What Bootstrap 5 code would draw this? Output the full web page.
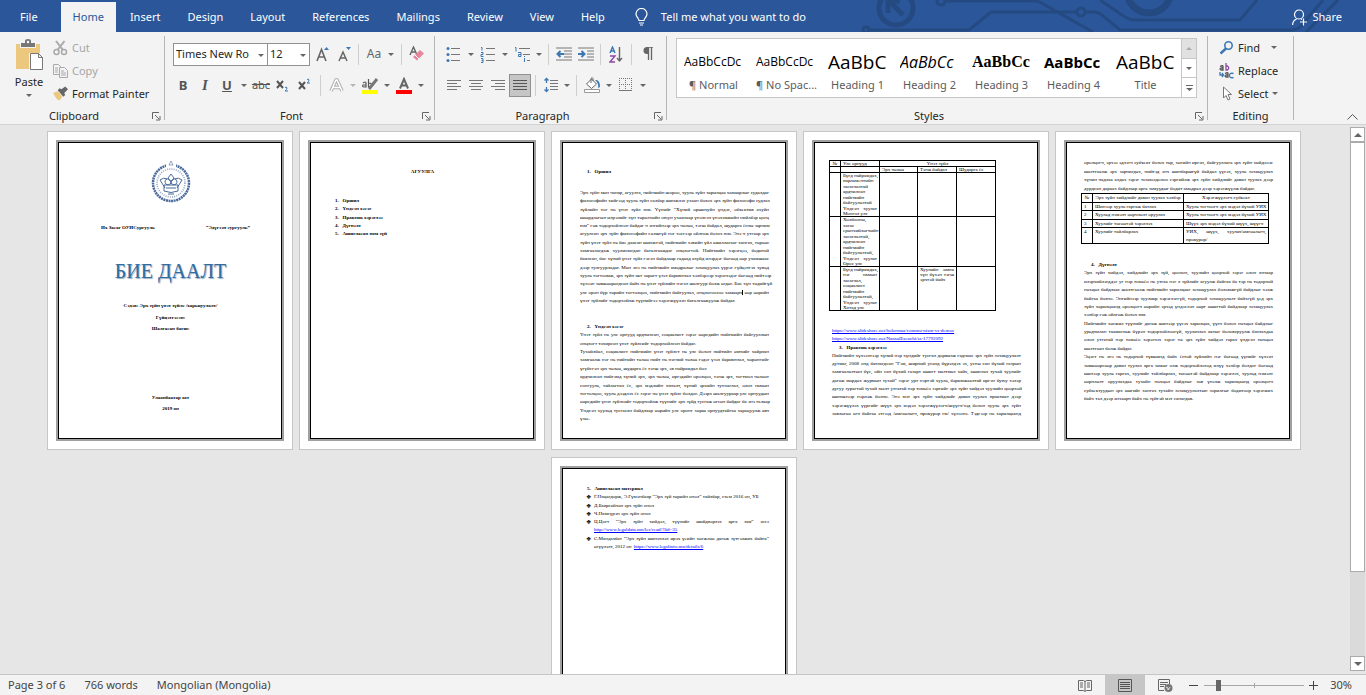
<!DOCTYPE html>
<html lang="en">
<head>
<meta charset="utf-8">
<meta name="viewport" content="width=device-width, initial-scale=1">
<title>Word</title>
<link href="https://cdn.jsdelivr.net/npm/bootstrap@5.3.0/dist/css/bootstrap.min.css" rel="stylesheet">
<style>
body{font:11px/16px "Noto Sans","Open Sans",sans-serif;color:#262626;background:#e6e6e6}
button,input{font:inherit;color:inherit}
button{border:0;background:none;padding:0}
svg{display:block;flex:none}
.topbar{height:32px;background:#2b579a;color:#fff;position:relative;padding-top:2px}
.circuit{position:absolute;right:0;top:0}
.tabs{padding-left:7px}
.tabs a{display:block;height:30px;line-height:30px;padding:0 13px;margin-right:1px;color:#fff;text-decoration:none}
.tabs a.on{background:#f3f3f3;color:#2b579a;padding:0 12px}
.tabs a.first{margin-right:10px}
.ribbon{height:93px;background:#f3f3f3;border-bottom:1px solid #d2d2d2}
.grp{height:84px;margin-top:4px;border-right:1px solid #b5b5b5;display:flex;flex-direction:column;justify-content:space-between;flex:none}
.g-clip{width:165px}.g-font{width:270px}.g-par{width:232px}.g-sty{width:541px}.g-edit{width:86px}
.cap{height:16px;line-height:16px;display:flex;align-items:center;text-align:center;margin-bottom:-4px}
.cap span{flex:1}
.cap button{width:16px;height:16px;display:grid;place-items:center}
.rw{display:flex;align-items:center;height:24px}
.rw+.rw{margin-top:7px}
.ic{width:22px;height:23px;display:grid;place-items:center;flex:none}
.ic.sel{background:#c5c5c5;border:1px solid #919191}
.dd{width:12px;height:23px;display:grid;place-items:center;flex:none}
.dd::after,.tri::after{content:"";border:3px solid transparent;border-top-color:#666;border-bottom:0}
.dd.off::after{border-top-color:#b5b5b5}
.vr1{width:1px;height:21px;background:#cfcfcf;margin:0 4px;flex:none}
.combo{height:23px;border:1px solid #919191;background:#fff;display:flex;flex:none}
.combo input{border:0;width:100%;min-width:0;padding:0 0 0 2px;background:none;outline:0}
.glyph{font-weight:700;color:#555;font-size:13px;line-height:16px}
.side button{display:flex;align-items:center;height:23px;gap:4px;white-space:nowrap}
.side .off{color:#a6a6a6}
.gallery{border:1px solid #c6c6c6;background:#fff;height:60px;margin:2px 10px 0 9px;display:flex}
.gallery .sty{width:72px;height:58px;padding:8px 6px 0 7px;flex:none}
.gallery b{display:block;font-weight:400;color:#000;height:26px;line-height:26px;overflow:hidden;white-space:nowrap;text-align:left;width:59px}
.gallery span{display:block;color:#5c5c5c;line-height:20px;white-space:nowrap;text-align:center}
.gallery b{font-family:"Open Sans",sans-serif}
.gallery .p1{font-size:12px}
.gallery .p2{font-size:19px}
.gallery .p3{font-size:16px;font-style:italic;font-weight:500}
.gallery .p4{font:700 16px/26px "Liberation Serif",serif}
.gallery .p5{font-size:15px;font-weight:700}
.spin{width:15px;border-left:1px solid #c6c6c6;margin-left:auto;display:flex;flex-direction:column}
.spin button{flex:1;display:grid;place-items:center}
.spin button+button{border-top:1px solid #c6c6c6}
.work{flex:1;min-height:0;overflow:hidden}
.pages{flex:1;gap:7px 6px;padding:6px 0 0;overflow:hidden;height:100%;align-content:flex-start}
.sheet{width:246px;height:319px;background:#fff;border:1px solid #c6c6c6;padding:8px;flex:none}
.frm{height:301px;border:2px solid #a0a0a0;outline:1px solid #000;outline-offset:-3px;padding:1px 17px 0 18px;font:5px/8px "Liberation Serif",serif;color:#000;display:flex;flex-direction:column;overflow:hidden}
.frm p,.frm h2{margin:0;font:inherit;line-height:8px;white-space:nowrap;flex:none}
.frm h2,.frm .bd{font-weight:700}
.frm h2{padding-left:7px}
.blk{display:flex;flex-direction:column;justify-content:space-between;flex:none}
.blk p{text-align:justify;text-align-last:justify}
.blk p.e{text-align-last:left}
.frm a{color:#00f}
.frm table{border-collapse:collapse;line-height:5px;flex:none;margin-left:-3px;table-layout:fixed}
.frm td,.frm th{border:1px solid #000;padding:0 2px;vertical-align:top;font-weight:400;white-space:nowrap}
.frm th{text-align:center}
.frm td p{line-height:5px}
.c44{height:43px}.c50{height:49px}
.emb{margin:18px auto 0}
.duo{display:flex;justify-content:space-between;padding:0 15px 0 25px;margin-top:21px}
.frm p.wa{font-size:20px;line-height:30px;color:#2e6ca4;text-shadow:1px 1px 1px #9ab;text-align:center;margin-top:24px}
.frm .m1{margin-top:16px}.frm .m2{margin-top:4px}.frm .m3{margin-top:3px}.frm .m4{margin-top:61px}
.toc{list-style:none;margin:21px 0 0;padding:0 0 0 7px;height:41px;font-weight:700}
.toc li{line-height:8px}
.frm .t25{margin-top:25px}
.h116{height:116px;margin-top:13px}.h100{height:100px;margin-top:18px}
.t17{margin-top:17px}.h91{height:91px;margin-top:16px}
.h33{height:34px;margin-top:16px}.h142{height:142px;margin-top:17px}
.h66{height:66px;margin-top:16px}
.h66 p{padding-left:14px;position:relative}
.h66 p.bu::before{content:"❖";position:absolute;left:6px;font:6px/8px "DejaVu Sans",sans-serif}
.caret{border-left:1px solid #000}
.sb{width:18px;flex:none;display:flex;flex-direction:column;padding:2px 1px 3px 2px}
.sb button{height:15px;border:1px solid #ababab;background:#fff;display:grid;place-items:center}
.sb .thumb{flex:430;border:1px solid #ababab;background:#fff}
.sb .track{flex:84;background:#dadada}
.stat{height:21px;background:#f3f3f3;border-top:1px solid #c6c6c6;color:#444;line-height:20px}
.stat .vw{width:40px;height:20px;display:grid;place-items:center}
.stat .vw.on{background:#c6c6c6}
.zoomr{-webkit-appearance:none;appearance:none;width:100px;height:12px;margin:0 5px;background:linear-gradient(#a6a6a6,#a6a6a6) 50px 50%/1px 5px no-repeat,linear-gradient(#a6a6a6,#a6a6a6) 0 50%/100% 1px no-repeat}
.zoomr::-webkit-slider-thumb{-webkit-appearance:none;width:5px;height:11px;background:#666}
</style>
</head>
<body class="d-flex flex-column vh-100 overflow-hidden">
<header class="topbar d-flex">
<svg class="circuit" width="520" height="32" viewBox="846 0 520 32" fill="none" stroke="#254a82" stroke-width="3"><circle cx="896" cy="8" r="17" stroke-width="5"/><path d="M889 1l14 14M888 13V1h12" stroke-width="5"/><circle cx="866" cy="30" r="3"/><path d="M869 30h100l22-18h86M1085 12h8q6 0 10 4l17 14h172q5 0 9-4l22-26M946 1h88q6 0 11 4l48 27M1100 0l25 17q5 3 10 3h105l17-20M1306 32l32-32"/><circle cx="941" cy="1" r="4"/><circle cx="1081" cy="12" r="4"/><circle cx="1149" cy="-9" r="22" stroke-width="7"/></svg>
<nav class="tabs d-flex position-relative"><a class="first" href="#">File</a><a class="on" href="#">Home</a><a href="#">Insert</a><a href="#">Design</a><a href="#">Layout</a><a href="#">References</a><a href="#">Mailings</a><a href="#">Review</a><a href="#">View</a><a href="#">Help</a></nav>
<button class="d-flex align-items-center position-relative ms-3" style="gap:13px"><svg width="13" height="18" viewBox="0 0 13 18" fill="none" stroke="#fff" stroke-width="1.2"><path d="M4 12.500c0-2-3-3.500-3-6.500a5.500 5.500 0 0 1 11 0c0 3-3 4.500-3 6.500zM4 15h5M5 17h3"/></svg>Tell me what you want to do</button>
<button class="d-flex align-items-center position-relative gap-1 ms-auto me-4"><svg width="16" height="17" viewBox="0 0 16 17" fill="none" stroke="#fff" stroke-width="1.200"><circle cx="7" cy="5.500" r="4.500"/><path d="M.6 16c0-3 1.500-5 4-6M9 10l1 .6M8 13h7M11.500 9.500v7"/></svg>Share</button>
</header>

<section class="ribbon d-flex">
<div class="grp g-clip">
 <div class="d-flex">
  <button class="d-flex flex-column align-items-center tri" style="margin-left:14px;padding-top:3px;gap:4px"><svg width="30" height="31" viewBox="0 0 30 31"><path fill="#ecc87f" d="M2 5h24v25H2z"/><path fill="#f3f3f3" d="M6 3h16v6H6zM15 14h15v17H15z"/><path fill="#777" d="M7 8V4h4V2q0-2 3-2t3 2v2h4v4z"/><circle cx="14" cy="3" r="1.200" fill="#fff"/><path d="M16.500 14.500h8l4 4v12h-12zM24.500 14.500v4h4" fill="#fff" stroke="#777"/></svg>Paste</button>
  <div class="side" style="margin-left:9px">
   <button class="off"><svg width="15" height="16" viewBox="0 0 15 16" fill="none" stroke="#aaa" stroke-width="1.500"><circle cx="3.500" cy="12" r="2.500"/><circle cx="11" cy="12" r="2.500"/><path d="M3 1l7 9M11.500 1l-7 9" stroke-width="2"/></svg>Cut</button>
   <button class="off"><svg width="15" height="14" viewBox="0 0 15 14" fill="#f3f3f3" stroke="#aaa"><path d="M.5.500h5l2 2v8h-7zM2 4h3M2 6h3M2 8h3"/><path d="M6.500 3.500h5l3 3v7h-8zM8 7h3M8 9h5M8 11h5"/></svg>Copy</button>
   <button><svg width="15" height="15" viewBox="0 0 16 15"><path fill="#ecc87f" d="M0 7l5-2 5 6-3 4q-3-1-4-3z"/><path fill="#666" d="M5 4l2-2 2 1 4-3 3 3-4 4 1 2-2 2z"/></svg>Format Painter</button>
  </div>
 </div>
 <div class="cap"><span>Clipboard</span><button aria-label="Clipboard options"><svg width="9" height="9" fill="none" stroke="#666"><path d="M.5 7V.5H7M3 3l4 4M8 4v4H4"/></svg></button></div>
</div>

<div class="grp g-font">
 <div style="padding:6px 0 0 8px">
  <div class="rw"><label class="combo" style="width:95px"><input aria-label="Font" value="Times New Ro"><span class="dd"></span></label><label class="combo" style="width:43px;margin-left:-1px"><input aria-label="Font size" value="12"><span class="dd"></span></label>
  <button class="ic" style="margin-left:2px" aria-label="Grow font"><svg width="14" height="16" viewBox="0 0 14 16"><path d="M1 15L5.500 3.500 10 15M2.500 11h6" fill="none" stroke="#666" stroke-width="1.600"/><path fill="#3c78b4" d="M8 4l2.500-3L13 4z"/></svg></button>
  <button class="ic" aria-label="Shrink font"><svg width="14" height="16" viewBox="0 0 14 16"><path d="M1 15L5 6l4 9M2.500 12h5" fill="none" stroke="#666" stroke-width="1.500"/><path fill="#3c78b4" d="M8 1h5l-2.500 3z"/></svg></button>
  <i class="vr1" style="margin-left:2px"></i><button class="ic" style="color:#666;font-size:12px">Aa</button><span class="dd"></span><i class="vr1"></i>
  <button class="ic" aria-label="Clear formatting"><svg width="16" height="16" viewBox="0 0 16 16"><path d="M1 9l3.500-8L8 9M2 6h5" fill="none" stroke="#666" stroke-width="1.400"/><path fill="#e8879c" d="M4 11l7-7 4 3.500-7 7z"/><path stroke="#fff" d="M6 9l4 4"/></svg></button></div>
  <div class="rw"><button class="ic glyph" style="margin-left:-1px">B</button><button class="ic glyph fst-italic" style="font-family:'Liberation Serif',serif;font-size:15px">I</button><button class="ic glyph text-decoration-underline">U</button><span class="dd"></span><button class="ic text-decoration-line-through" style="color:#555">abc</button>
  <button class="ic" aria-label="Subscript"><svg width="14" height="14" viewBox="0 0 14 14" fill="none"><path d="M1 3l6 7M7 3l-6 7" stroke="#555" stroke-width="2"/><path d="M9 9.500q2-1 2 .5T9 13h3" stroke="#3c78b4"/></svg></button><button class="ic" aria-label="Superscript"><svg width="14" height="14" viewBox="0 0 14 14" fill="none"><path d="M1 4l6 7M7 4l-6 7" stroke="#555" stroke-width="2"/><path d="M9 1.500q2-1 2 .5T9 5h3" stroke="#3c78b4"/></svg></button>
  <i class="vr1"></i><button class="ic" aria-label="Text effects"><svg width="15" height="15" viewBox="0 0 15 15"><path d="M2 13L7 2h1l5 11M4 9.500h7" fill="none" stroke="#b0b0b0" stroke-width="3.500"/><path d="M2 13L7 2h1l5 11M4 9.500h7" fill="none" stroke="#fff" stroke-width="1.400"/></svg></button><span class="dd off"></span>
  <button class="ic" aria-label="Highlight"><svg width="18" height="17" viewBox="0 0 18 17"><path fill="#ff0" d="M1 13h16v4H1z"/><path d="M2 6q3-2 3 0v4H3Q1 10 2 8h3M7.500 2v8h2q3-4-2-4" fill="none" stroke="#555" stroke-width="1.200"/><path d="M8 12l8-10" stroke="#777" stroke-width="3"/></svg></button><span class="dd"></span>
  <button class="ic" aria-label="Font color"><svg width="16" height="17" viewBox="0 0 16 17"><path fill="red" d="M0 13h16v4H0z"/><path d="M4 11.500L8 2l4 9.500M5.500 8.500h5" fill="none" stroke="#666" stroke-width="2"/></svg></button><span class="dd"></span></div>
 </div>
 <div class="cap"><span>Font</span><button aria-label="Font options"><svg width="9" height="9" fill="none" stroke="#666"><path d="M.5 7V.5H7M3 3l4 4M8 4v4H4"/></svg></button></div>
</div>

<div class="grp g-par">
 <div style="padding:6px 0 0 8px">
  <div class="rw"><button class="ic" aria-label="Bullets"><svg width="16" height="16" viewBox="0 0 16 16"><path d="M5 2.500h9M5 8.500h9M5 14.500h9" stroke="#777"/><g fill="#3c78b4"><circle cx="2" cy="2.500" r="1.500"/><circle cx="2" cy="8.500" r="1.500"/><circle cx="2" cy="14.500" r="1.500"/></g></svg></button><span class="dd"></span>
  <button class="ic" aria-label="Numbering"><svg width="16" height="17" viewBox="0 0 16 17" fill="none"><path d="M6 2.500h9M6 8.500h9M6 14.500h9" stroke="#777"/><path d="M1 1.500h1v3M1 6.500h2v2H1v2h2.500M1 12.500h2v4H1M1.500 14.500H3" stroke="#3c78b4"/></svg></button><span class="dd"></span>
  <button class="ic" aria-label="Multilevel list"><svg width="17" height="17" viewBox="0 0 17 17" fill="none"><path d="M5 2.500h11M9 8.500h7M13 14.500h3" stroke="#777"/><path d="M1 1.500h1v4M4 6.500h3v4H4.500v-2H7M10.500 12v4M10.500 10v1" stroke="#3c78b4"/></svg></button><span class="dd" style="width:11px"></span><i class="vr1"></i>
  <button class="ic" aria-label="Decrease indent"><svg width="17" height="14" viewBox="0 0 17 14" fill="none"><path d="M0 1h16M8 4h8M8 7h8M8 10h8M0 13h16" stroke="#777"/><path d="M8 7H2M4.500 4l-3 3 3 3" stroke="#3c78b4" stroke-width="2"/></svg></button><button class="ic" aria-label="Increase indent"><svg width="17" height="14" viewBox="0 0 17 14" fill="none"><path d="M0 1h16M9 4h7M9 7h7M9 10h7M0 13h16" stroke="#777"/><path d="M0 7h6M3.500 4l3 3-3 3" stroke="#3c78b4" stroke-width="2"/></svg></button><i class="vr1" style="margin-left:3px"></i>
  <button class="ic" aria-label="Sort"><svg width="14" height="17" viewBox="0 0 14 17" fill="none" stroke-width="1.400"><path d="M1 7l2.500-6L6 7M2 5h3" stroke="#3c78b4"/><path d="M1 10h5l-5 6h5" stroke="#8a4aa8"/><path d="M10.500 1v14M8 12l2.500 3L13 12" stroke="#666"/></svg></button><i class="vr1"></i><button class="ic" aria-label="Show marks"><svg width="11" height="14" viewBox="0 0 11 14"><path d="M5 0h6M6.500 0v13M9.500 0v13" stroke="#666" stroke-width="1.300"/><path fill="#666" d="M5 0a3.500 3.500 0 0 0 0 7h1V0z"/></svg></button></div>
  <div class="rw"><button class="ic" aria-label="Align left"><svg width="14" height="11" stroke="#777"><path d="M0 .5h14M0 3.500h10M0 6.500h14M0 9.500h10"/></svg></button><button class="ic" aria-label="Center"><svg width="14" height="11" stroke="#777"><path d="M0 .5h14M2 3.500h10M0 6.500h14M2 9.500h10"/></svg></button><button class="ic" aria-label="Align right"><svg width="14" height="11" stroke="#777"><path d="M0 .5h14M4 3.500h10M0 6.500h14M4 9.500h10"/></svg></button><button class="ic sel" aria-label="Justify"><svg width="14" height="11" stroke="#555"><path d="M0 .5h14M0 3.500h14M0 6.500h14M0 9.500h14"/></svg></button><i class="vr1"></i>
  <button class="ic" aria-label="Line spacing"><svg width="15" height="16" viewBox="0 0 15 16" fill="none"><path d="M6 3.500h8M6 6.500h8M6 9.500h8M6 12.500h8" stroke="#777"/><path d="M2.500 1v5M2.500 10v5M.5 3.500l2-2 2 2M.5 12.500l2 2 2-2" stroke="#3c78b4" stroke-width="1.300"/></svg></button><span class="dd" style="width:10px"></span><i class="vr1"></i>
  <button class="ic" aria-label="Shading"><svg width="17" height="16" viewBox="0 0 17 16" fill="none"><path d="M.5 12.500h15v3H.5z" fill="#fff" stroke="#999"/><path d="M2.500 7l5-5 5 5-5 4.500zM7 6V1.500q1.500-2 2 0V4" fill="#fff" stroke="#666"/><path fill="#3c78b4" d="M11 3q5-1 5 7l-2 1q1-5-3-8z"/></svg></button><span class="dd"></span><button class="ic" aria-label="Borders"><svg width="14" height="14" viewBox="0 0 14 14" stroke="#777" fill="none"><path d="M.5 0v12M6.500 0v12M12.500 0v12M0 .5h13M0 6.500h13" stroke-dasharray="1 1"/><path d="M0 12.500h13"/></svg></button><span class="dd"></span></div>
 </div>
 <div class="cap"><span>Paragraph</span><button aria-label="Paragraph options"><svg width="9" height="9" fill="none" stroke="#666"><path d="M.5 7V.5H7M3 3l4 4M8 4v4H4"/></svg></button></div>
</div>

<div class="grp g-sty">
 <div class="gallery">
  <button class="sty"><b class="p1">AaBbCcDc</b><span>¶ Normal</span></button><button class="sty"><b class="p1">AaBbCcDc</b><span>¶ No Spac...</span></button><button class="sty"><b class="p2">AaBbC</b><span>Heading 1</span></button><button class="sty"><b class="p3">AaBbCc</b><span>Heading 2</span></button><button class="sty"><b class="p4">AaBbCc</b><span>Heading 3</span></button><button class="sty"><b class="p5">AaBbCc</b><span>Heading 4</span></button><button class="sty"><b class="p2">AaBbC</b><span>Title</span></button>
  <div class="spin"><button aria-label="Up" style="background:#e1e1e1"><svg width="6" height="3"><path fill="#aaa" d="M0 3l3-3 3 3z"/></svg></button><button aria-label="Down"><svg width="6" height="3"><path fill="#666" d="M0 0l3 3 3-3z"/></svg></button><button aria-label="More"><svg width="7" height="6"><path fill="#666" d="M0 0h7v1H0zM0 3h7L3.500 6z"/></svg></button></div>
 </div>
 <div class="cap"><span>Styles</span><button aria-label="Styles options"><svg width="9" height="9" fill="none" stroke="#666"><path d="M.5 7V.5H7M3 3l4 4M8 4v4H4"/></svg></button></div>
</div>

<div class="grp g-edit">
 <div class="side" style="padding-left:11px">
  <button><svg width="15" height="14" viewBox="0 0 15 14" fill="none" stroke="#3c78b4"><circle cx="9.500" cy="4.500" r="3.700" stroke-width="1.600"/><path d="M7 7.500l-5.500 5" stroke-width="2.500"/></svg>Find<span class="dd" style="margin-left:4px"></span></button>
  <button><svg width="15" height="16" viewBox="0 0 15 16" fill="none" stroke-width="1.300"><path d="M1 3.500q3-1.500 3 0V7H2Q0 6 2 5h2" stroke="#555"/><path d="M7 0v7h1.500q2.500-2 0-4H7" stroke="#8a4aa8"/><path d="M6 10.500q3-1.500 3 0V14H7q-2-1 0-2h2" stroke="#555"/><path d="M14.500 10.500q-4-1-4 2t4 2M1 9v3h3M3 10l1.500 2L3 14" stroke="#3c78b4"/></svg>Replace</button>
  <button><svg width="15" height="15" viewBox="0 0 15 15"><path d="M4.500 1v11l2.500-2.500 2 4.500 2-1-2-4.500h3.500z" fill="#fff" stroke="#777"/></svg>Select<span class="dd" style="margin-left:-4px"></span></button>
 </div>
 <div class="cap"><span>Editing</span></div>
</div>
<button class="ms-auto align-self-end mb-1 me-2" aria-label="Collapse"><svg width="11" height="6" fill="none" stroke="#555"><path d="M.5 5.500l5-5 5 5"/></svg></button>
</section>

<main class="work d-flex">
<div class="pages d-flex flex-wrap justify-content-center">
<article class="sheet"><div class="frm">
 <svg class="emb" width="40" height="42" viewBox="0 0 40 42" fill="none" stroke="#4a6a9c"><circle cx="20" cy="22" r="18" stroke-width="2.500" stroke-dasharray="2 .6"/><circle cx="20" cy="22" r="14" stroke-dasharray="1 1.200" stroke-width="1.600" opacity=".6"/><path d="M15 0h10v7H15z" fill="#fff" stroke="none"/><path d="M18 4l2-4 2 4z" fill="#fff" stroke-width=".6"/><path d="M14 27l-5-8q3-3 8-1l3 2 3-2q5-2 8 1l-5 8M13 24h14v6q-7 3-14 0zM15 27h10M17 33h6M20 13l-3 4 3 4 3-4zM16 18a3 3 0 1 0 4 3 3 3 0 1 0 4-3"/></svg>
 <div class="duo bd"><p>Их Засаг ОУИСургууль</p><p>“Эдүгээн сургууль”</p></div>
 <p class="wa">БИЕ ДААЛТ</p>
 <p class="bd text-center m1">Сэдэв: Эрх зүйн үнэт зүйлс /харьцуулалт/</p><p class="bd text-center m2">Гүйцэтгэсэн:</p><p class="bd text-center m3">Шалгасан багш:</p>
 <p class="bd text-center m4">Улаанбаатар хот</p><p class="bd text-center m3">2019 он</p>
</div></article>

<article class="sheet"><div class="frm">
 <p class="bd text-center t25">АГУУЛГА</p>
 <ol class="toc blk"><li>1.&ensp; Оршил</li><li>2.&ensp; Үндсэн хэсэг</li><li>3.&ensp; Практик хэрэглээ</li><li>4.&ensp; Дүгнэлт</li><li>5.&ensp; Ашигласан ном зүй</li></ol>
</div></article>

<article class="sheet"><div class="frm">
 <h2 class="t25">1.&ensp; Оршил</h2>
 <div class="blk h116"><p>Эрх зүйн мөн чанар, агуулга, нийгмийн шороо, хууль зүйн харилцаа хамаарлыг судалдаг</p><p>философийн хийгээд хууль зүйн салбар шинжлэх ухаан болох эрх зүйн философи судлах</p><p>зүйлийн нэг нь үнэт зүйл юм. Үүнийг “Хүний оршихуйн үндэс, объектив ахуйн</p><p>шаардлагын илрэлийг хүн төрөлхийн оюун ухаанаар үнэлсэн үнэлэмжийн нийлбэр цогц</p><p>юм” гэж тодорхойлсон байдаг ч энгийнээр эрх чөлөө, тэгш байдал, шударга ёсны зарчим</p><p>агуулсан эрх зүйн философийн салшгүй нэг хэсгээр ойлгож болох юм. Энэ ч утгаар эрх</p><p>зүйн үнэт зүйл нь бие даасан шинжтэй, нийгмийн хэвийн үйл ажиллагааг хангах, төрөөс</p><p>хамгаалагдаж хуульчлагдан баталгааждаг онцлогтой. Нийгмийн хэрэгцээ, бодитой</p><p>баялсан, бас хүний үнэт зүйл гэсэн байдлаар гадаад ахуйд илэрдэг бөгөөд өөр ухамшаас</p><p>дээр тулгуурладаг. Мөн энэ нь нийгмийн амьдралыг зохицуулах үүрэг гүйцэтгэх хувьд</p><p>хууль тогтоомж, эрх зүйн акт зөрөгт үзэл баримтлал хэлбэрээр хэрэглэдэг бөгөөд нийтээр</p><p>хүлээн зөвшөөрөгдсөн байх нь үнэт зүйлийн нэгэн шалгуур болж өгдөг. Бие хүн төдийгүй</p><p>улс орон бүр төрийн тогтолцоо, нийгмийн байгуулал, онцлогоосоо хамаарч<span class="caret"></span> өөр өөрийн</p><p class="e">үнэт зүйлийг тодорхойлж түүнийгээ хэрэгжүүлэн баталгаажуулж байдаг.</p></div>
 <div class="blk h100"><h2>2.&ensp; Үндсэн хэсэг</h2><p>Үнэт зүйл нь улс орнууд ардчилсан, социалист зэрэг өөрсдийн нийгмийн байгууллын</p><p class="e">онцлогт тохирсон үнэт зүйлсийг тодорхойлсон байдаг.</p><p>Тухайлбал, социалист нийгмийн үнэт зүйлст нь улс болон нийтийн өмчийг хайрлан</p><p>хамгаалж нэг нь нийтийн төлөө нийт нь нэгний төлөө гэдэг үзэл баримтлал, хөрөнгийг</p><p class="e">үгүйсгэн эрх чөлөө, шударга ёс тэгш эрх, эв найрамдал бол</p><p>ардчилсан нийгэмд хүний эрх, эрх чөлөө, иргэдийн оролцоо, тэгш эрх, тогтмол чөлөөт</p><p>сонгууль, тайлагнах ёс, эрх мэдлийн хяналт, хүний эрхийн тунхаглал, олон намын</p><p>тогтолцоо, хууль дээдлэх ёс зэрэг нь үнэт зүйлс болдог. Дээрх шалгуураар улс орнуудын</p><p>өөрсдийн үнэт зүйлсийг тодорхойлж түүнийг эрх зүйд тусгаж өгсөн байдаг ба энэ талаар</p><p>Үндсэн хуульд тусгасан байдлаар өөрийн улс оронг хөрш орнуудтайгаа харьцуулж авч</p><p class="e">үзье.</p></div>
</div></article>

<article class="sheet"><div class="frm">
 <table class="t17" style="width:166px"><colgroup><col style="width:11px"><col style="width:39px"><col style="width:38px"><col style="width:39px"><col style="width:39px"></colgroup>
 <tr><th>№</th><td>Улс орнууд</td><th colspan="3">Үнэт зүйл</th></tr><tr><td></td><td></td><td>Эрх чөлөө</td><td>Тэгш байдал</td><td>Шударга ёс</td></tr>
 <tr><td></td><td><div class="blk c44"><p class="e">Бүгд найрамдах,</p><p class="e">парламентийн</p><p class="e">засаглалтай</p><p class="e">ардчилсан</p><p class="e">нийгмийн</p><p class="e">байгуулалтай</p><p>Үндсэн хуульт</p><p class="e">Монгол улс</p></div></td><td></td><td></td><td></td></tr>
 <tr><td></td><td><div class="blk c50"><p class="e">Холбооны,</p><p class="e">хагас</p><p class="e">ерөнхийлөгчийн</p><p class="e">засаглалтай,</p><p class="e">ардчилсан</p><p class="e">нийгмийн</p><p class="e">байгуулалтай,</p><p>Үндсэн хуульт</p><p class="e">Орос улс</p></div></td><td></td><td></td><td></td></tr>
 <tr><td></td><td><div class="blk c44"><p class="e">Бүгд найрамдах,</p><p>нэг намын</p><p class="e">засаглал,</p><p class="e">социалист</p><p class="e">нийгмийн</p><p class="e">байгуулалтай,</p><p>Үндсэн хуульт</p><p class="e">Хятад улс</p></div></td><td></td><td><div class="blk"><p>Хуулийн өмнө</p><p>хүн бүхэн тэгш</p><p class="e">эрхтэй байх</p></div></td><td></td></tr></table>
 <div class="blk h91"><p class="e"><a href="#">https://www.slideshare.net/bolormaa/commu-nism-vs-democ</a></p><p class="e"><a href="#">https://www.slideshare.net/NansalEsenchi/ss-17792092</a></p><h2>3.&ensp; Практик хэрэглээ</h2><p>Нийгмийн хүлээлтээр хүний нэр хүндийг тусган дорвилж гаднаас эрх зүйн зохицуулалт</p><p>дутмаг, 2008 онд батлагдсан “Гэм, ширний усанд бүрэлдэх эх, усны сан бүхий газрын</p><p>хамгаалалтын бүс, ойн сан бүхий газарт ашигт малтмал хайх, ашиглах тухай хуулийг</p><p>дагаж мөрдөх журмын тухай” зэрэг урт нэртэй хууль, баримжаалтай иргэн буюу хэлэр</p><p>дугуу зурагтай тухай заалт утгатай нэр томьёо зэргийг эрх зүйн хийдэл хуулийн цоорхой</p><p>шиншлээр нэрлэж болно. Энэ мэт эрх зүйн хийдлийг даван туулах практикт дээр</p><p>хэрэгжүүлэх үүргийг шүүх эрх мэдэл хэрэгжүүлэгч/шүүгч/хэд болон хууль эрх зүйн</p><p>зөвлөгөө өгч байгаа этгээд /өмгөөлөгч, прокурор гм/ хүлээнэ. Тэдгээр нь харилцаанд</p></div>
</div></article>

<article class="sheet"><div class="frm">
 <div class="blk h33"><p>оролцогч, эрхээ эдлэгч субъект болох төр, хөгийн иргэн, байгууллага эрх зүйн хийдлээс</p><p>шалтгаалж эрх зөрчигдөх, нийтэд энх шинбаршгүй байдал үүсэх, хууль зохицуулах</p><p>хүчин чадлаа алдах зэрэг тохиолдолоо сэргийлж эрх зүйн хийдлийг даван туулах дээр</p><p class="e">дурдсан дараах байдлаар арга замуудыг бодит амьдрал дээр хэрэгжүүлж байдаг.</p></div>
 <table style="width:187px;line-height:7px"><colgroup><col style="width:11px"><col style="width:91px"><col style="width:85px"></colgroup>
 <tr style="height:9px"><th>№</th><th>Эрх зүйн хийдлийг даван туулах хэлбэр</th><th>Хэрэгжүүлэгч субъект</th></tr><tr><td>1</td><td>Шинээр хууль гаргаж батлах</td><td>Хууль тогтоогч эрх мэдэл бүхий УИХ</td></tr><tr style="height:9px"><td>2</td><td>Хуульд нэмэлт өөрчлөлт оруулах</td><td>Хууль тогтоогч эрх мэдэл бүхий УИХ</td></tr><tr><td>3</td><td>Хуулийг төсөөтэй хэрэглэх</td><td>Шүүх эрх мэдэл бүхий шүүх, шүүгч</td></tr><tr style="height:16px"><td>4</td><td>Хуулийг тайлбарлах</td><td><div class="blk" style="gap:3px;padding-top:1px"><p>УИХ, шүүх, хуульч/өмгөөлөгч,</p><p class="e">прокурор/</p></div></td></tr></table>
 <div class="blk h142"><h2>4.&ensp; Дүгнэлт</h2><p>Эрх зүйн хийдэл, хийдлийн эрх зүй, цоохон, хуулийн цоорхой зэрэг олон янзаар</p><p>илэрхийлэгддэг уг нэр томьёо нь утгаа нэг л зүйлийг агуулж байгаа ба тэр нь тодорхой</p><p>нөхцөл байдлаас шалтгаалж нийгмийн харилцааг зохицуулах боломжгүй байдлыг хэлж</p><p>байгаа болно. Энгийнээр хуулиар хэрэглэггүй, тодорхой зохицуулалт байхгүй үед эрх</p><p>зүйн харилцаанд оролцогч өөрийн эрхэд үндэслэн өөрт ашигтай байдлаар зохицуулах</p><p class="e">хэлбэр гэж ойлгож болох юм.</p><p>Нийгмийн хөгжил түүнийг дагаж шинээр үүсэх харилцаа, үүсч болох нөхцөл байдлыг</p><p>урьдчилан таамаглаж бүрэн тодорхойлоогүй, хуульчлах актыг боловсруулж батлахдаа</p><p>олон утгатай нэр томьёо хэрэглэх зэрэг нь эрх зүйн хийдэл гарах үндсэн нөхцөл</p><p class="e">шалтгаан болж байдаг.</p><p>Эцэст нь энэ нь тодорхой түвшинд байх ёстой зүйлийн нэг бөгөөд үүнийг хүлээн</p><p>зөвшөөрсөөр даван туулах арга замыг олж тодорхойлоход илүү хэлбэр болдог бөгөөд</p><p>шинээр хууль гаргах, хуулийг тайлбарлах, төсөөтэй байдлаар хэрэглэх, хуульд нэмэлт</p><p>өөрчлөлт оруулахдаа тухайн нөхцөл байдлыг зөв үнэлж харилцаанд оролцогч</p><p>субъектуудын эрх ашгийг хангах тухайн зохицуулалтын зорилгыг бодитоор хэрэгжих</p><p class="e">байх тал дээр анхаарч байх нь зүйтэй мэт санагдав.</p></div>
</div></article>

<article class="sheet"><div class="frm">
 <div class="blk h66"><h2>5.&ensp; Ашигласан материал</h2><p class="e bu">Г.Няцагдорж, Э.Гүмэнбаяр “Эрх зүй төрийн онол” тайлбар, схем 2016 он, УБ</p><p class="e bu">Д.Баярсайхан эрх зүйн онол</p><p class="e bu">Ч.Нямсүрэн эрх зүйн онол</p><p class="bu">Ц.Цогт “Эрх зүйн хийдэл, түүнийг шийдвэрлэх арга зам” эссэ</p><p class="e"><a href="#">http://www.legaldata.mn/lec/read/?lid=35</a></p><p class="bu">С.Мандахбат “Эрх зүйн шинэчлэл ирэх үеийн хөгжлөө дагаж зүтгэлжих байна”</p><p class="e">өгүүлэлт, 2012 он &nbsp;<a href="#">https://www.legalinfo.mn/details/6</a></p></div>
</div></article>
</div>
<div class="sb"><button aria-label="Scroll up"><svg width="8" height="4"><path fill="#666" d="M0 4l4-4 4 4z"/></svg></button><div class="thumb"></div><div class="track"></div><button aria-label="Scroll down"><svg width="8" height="4"><path fill="#666" d="M0 0l4 4 4-4z"/></svg></button></div>
</main>

<footer class="stat d-flex align-items-center">
<span class="ms-2">Page 3 of 6</span><span style="margin-left:19px">766 words</span><span style="margin-left:19px">Mongolian (Mongolia)</span>
<button class="vw ms-auto" aria-label="Read mode"><svg width="14" height="13" viewBox="0 0 14 13" fill="none" stroke="#666"><path d="M.5 1.500h5l1.500 1 1.500-1h5v10h-5l-1.500 1-1.500-1h-5zM7 2v10M2 4h3M2 6h3M2 8h3M9 4h3M9 6h3M9 8h3"/></svg></button><button class="vw on" aria-label="Print layout"><svg width="14" height="13" fill="none" stroke="#555"><path d="M.5.500h13v12H.5zM2 3.500h10M2 5.500h10M2 7.500h10M2 9.500h10"/></svg></button><button class="vw" aria-label="Web layout"><svg width="15" height="13" viewBox="0 0 15 13"><path d="M6 11.500H.5V.5h11V5M2 3.500h8M2 5.500h6M2 7.500h4" fill="none" stroke="#666"/><circle cx="10.500" cy="9" r="4" fill="#777"/><path d="M8 8l2 1v2l2-3" stroke="#fff" fill="none" stroke-width=".8"/></svg></button>
<button aria-label="Zoom out" class="ms-1"><svg width="10" height="9" stroke="#444"><path d="M0 4.500h9"/></svg></button><input class="zoomr" type="range" min="0" max="100" value="12" aria-label="Zoom"><button aria-label="Zoom in"><svg width="9" height="9" stroke="#444"><path d="M0 4.500h9M4.500 0v9"/></svg></button><span style="margin:0 14px 0 12px">30%</span>
</footer>
<script src="https://cdn.jsdelivr.net/npm/bootstrap@5.3.0/dist/js/bootstrap.bundle.min.js"></script>
</body>
</html>
